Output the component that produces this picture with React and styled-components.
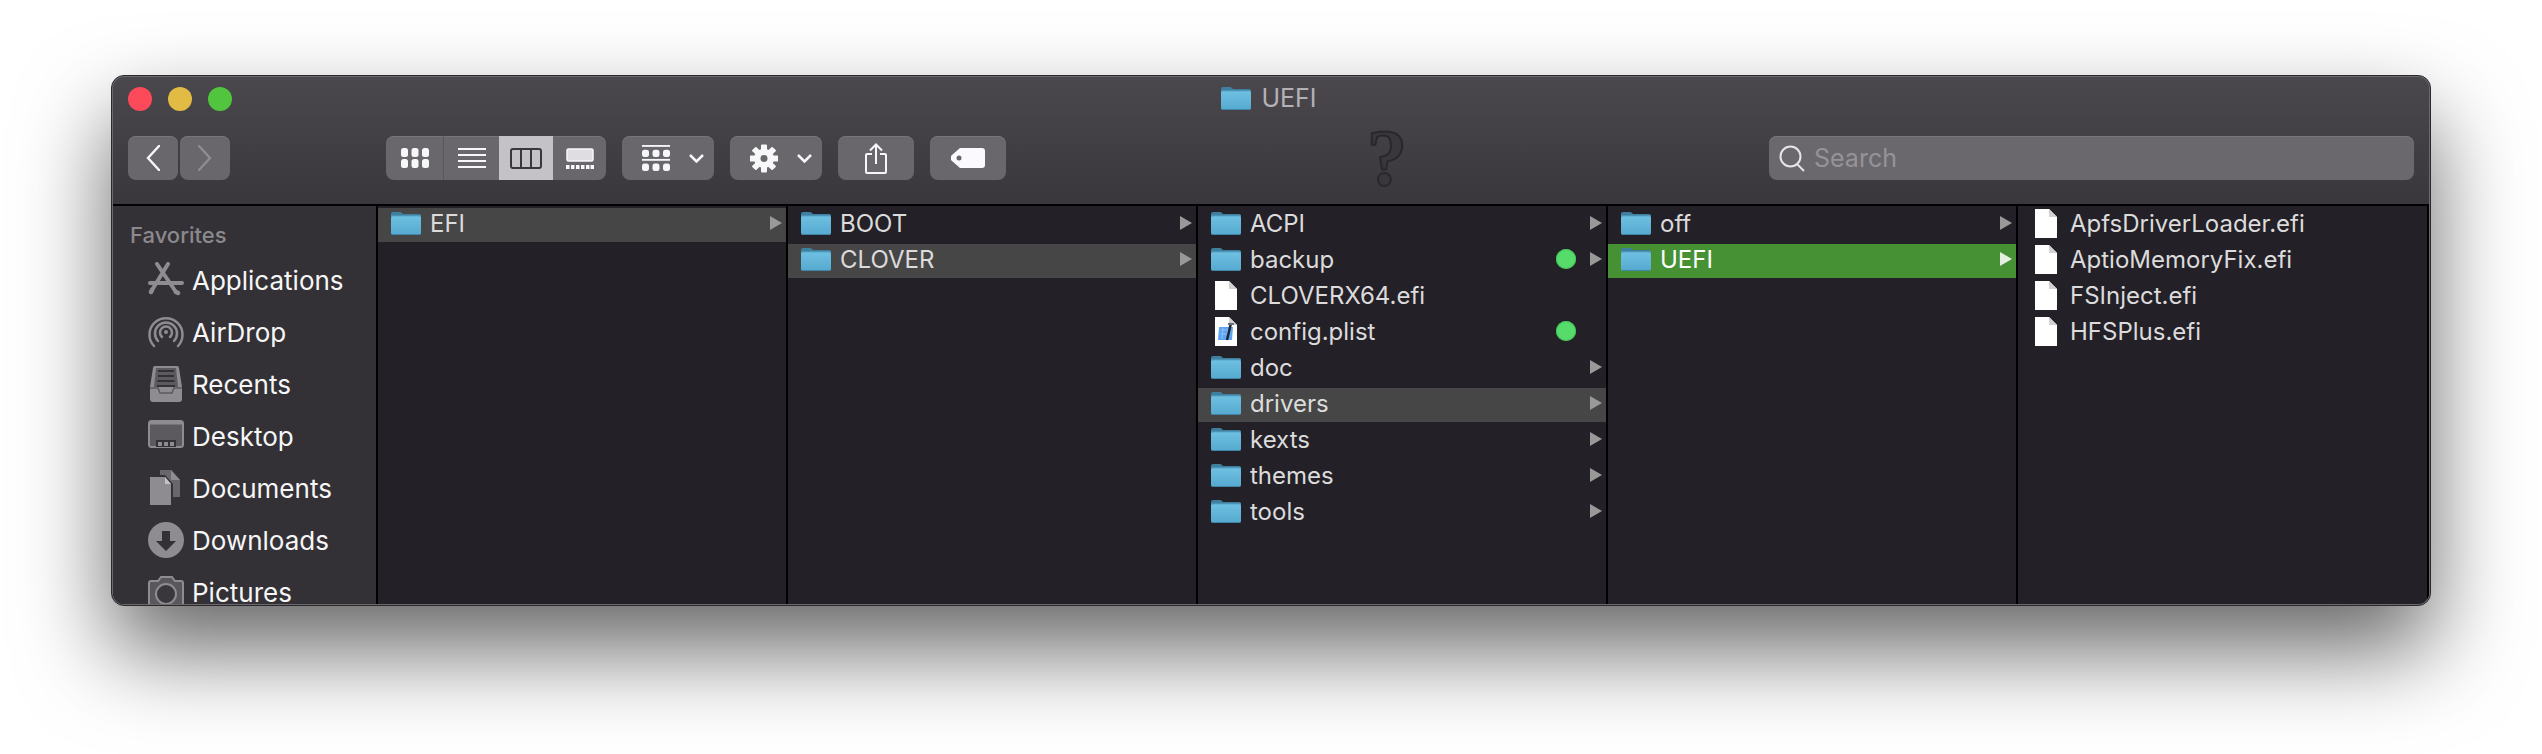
import React from 'react';
import styled, { createGlobalStyle } from 'styled-components';

const GlobalStyle = createGlobalStyle`
  html, body {
    margin: 0;
    height: 754px;
    overflow: hidden;
    background: #fff;
  }
  body {
    font-family: 'Inter', 'Liberation Sans', sans-serif;
    -webkit-font-smoothing: antialiased;
  }
`;

const Page = styled.div`
  width: 2542px;
  height: 754px;
  box-sizing: border-box;
  padding: 75px 0 0 111px;
  overflow: hidden;
`;

const Window = styled.div`
  width: 2320px;
  height: 531px;
  box-sizing: border-box;
  padding: 1px;
  border: 1px solid #2a2a2c;
  border-radius: 13px;
  background: #6b696d;
  box-shadow: 0 44px 90px rgba(0, 0, 0, 0.6);
  display: flex;
`;

const Inner = styled.div`
  flex: 1;
  min-width: 0;
  border-radius: 11px;
  overflow: hidden;
  display: flex;
  flex-direction: column;
`;

const Toolbar = styled.header`
  background: linear-gradient(#4a484d, #39373b);
  border-bottom: 2px solid #000;
  box-sizing: border-box;
  height: 129px;
  flex: none;
`;

const TitleBar = styled.div`
  height: 42px;
  margin-bottom: 17px;
  display: grid;
  grid-template-columns: 1fr auto 1fr;
  align-items: center;
  padding: 0 15px;
`;

const Lights = styled.div`
  display: flex;
  gap: 16px;
  padding-top: 1px;
`;

const Light = styled.span`
  width: 24px;
  height: 24px;
  border-radius: 50%;
  background: ${(p) => p.$color};
`;

const Title = styled.div`
  display: flex;
  align-items: center;
  gap: 10px;
  margin-right: 4px;
  color: #b3b1b5;
  font-size: 25px;
`;

const Tools = styled.div`
  display: flex;
  align-items: center;
  padding: 0 15px;
`;

const ToolButton = styled.div`
  width: ${(p) => p.$w}px;
  height: 44px;
  margin-left: ${(p) => p.$ml || 0}px;
  border-radius: 8px;
  background: #69676c;
  box-shadow: inset 0 1px 0 #78767b;
  display: flex;
  align-items: center;
  justify-content: ${(p) => (p.$menu ? 'flex-start' : 'center')};
  padding-left: ${(p) => (p.$menu ? '20px' : '0')};
  box-sizing: border-box;
  flex: none;
  gap: ${(p) => (p.$menu ? '19px' : '0')};
`;

const SegmentGroup = styled.div`
  display: flex;
  margin-left: 156px;
  height: 44px;
  border-radius: 8px;
  overflow: hidden;
  background: #69676c;
  box-shadow: inset 0 1px 0 #78767b;
  flex: none;
`;

const Segment = styled.div`
  width: ${(p) => p.$w}px;
  display: flex;
  align-items: center;
  justify-content: center;
  background: ${(p) => (p.$active ? '#c4c2c7' : 'transparent')};
  border-right: ${(p) => (p.$divide ? '1px solid #59575b' : 'none')};
`;

const Placeholder = styled.div`
  width: 34px;
  margin-left: 364px;
  display: flex;
  justify-content: center;
  font-family: 'Liberation Serif', serif;
  font-size: 80px;
  font-weight: 700;
  line-height: 44px;
  color: #39373b;
  -webkit-text-stroke: 2px #29272b;
  flex: none;
`;

const Search = styled.div`
  margin-left: auto;
  width: 645px;
  height: 44px;
  box-sizing: border-box;
  padding-left: 10px;
  border-radius: 8px;
  background: #6a686d;
  box-shadow: inset 0 1px 0 #78767b;
  display: flex;
  align-items: center;
  gap: 9px;
  color: #959398;
  font-size: 25px;
`;

const Body = styled.div`
  flex: 1;
  min-height: 0;
  display: flex;
  background: #232127;
`;

const Sidebar = styled.nav`
  width: 263px;
  flex: none;
  background: #333136;
  padding: 13px 0 0 17px;
  box-sizing: border-box;
  overflow: hidden;
`;

const SideHeading = styled.div`
  height: 32px;
  margin-bottom: 3px;
  line-height: 32px;
  color: #8b898d;
  font-size: 22px;
  font-weight: 500;
`;

const SideRow = styled.div`
  height: 52px;
  padding-left: 18px;
  display: flex;
  align-items: center;
  gap: 8px;
  color: #f6f6f6;
  font-size: 26px;
  white-space: nowrap;
`;

const SideIcon = styled.svg`
  width: 36px;
  height: 36px;
  flex: none;
`;

const Column = styled.section`
  width: 410px;
  flex: ${(p) => (p.$last ? 1 : 'none')};
  box-sizing: border-box;
  border-left: 2px solid #000;
  border-right: ${(p) => (p.$last ? '2px solid #000' : 'none')};
  padding-top: 2px;
`;

const Row = styled.div`
  height: 34px;
  box-sizing: border-box;
  margin-bottom: 2px;
  padding: 0 4px 4px 13px;
  display: flex;
  align-items: center;
  gap: 9px;
  background: ${(p) => (p.$sel === 'active' ? '#459133' : p.$sel ? '#464646' : 'transparent')};
  color: ${(p) => (p.$sel === 'active' ? '#fff' : '#dcdbdc')};
  font-size: 24px;
`;

const IconSlot = styled.span`
  width: 30px;
  height: 30px;
  flex: none;
  display: flex;
  align-items: center;
  justify-content: center;
`;

const Name = styled.span`
  flex: 1;
  white-space: nowrap;
`;

const Dot = styled.span`
  width: 20px;
  height: 20px;
  margin-right: ${(p) => (p.$arrow ? '5px' : '26px')};
  border-radius: 50%;
  background: #57dc6c;
  box-shadow: inset 0 0 0 1px #3fc455;
  flex: none;
`;

const Arrow = styled.span`
  width: 0;
  height: 0;
  border-left: 12px solid ${(p) => (p.$light ? '#e4efe0' : '#999')};
  border-top: 7.5px solid transparent;
  border-bottom: 7.5px solid transparent;
  flex: none;
`;

const FolderIcon = ({ id }) => (
  <svg width='30' height='24' viewBox='0 0 30 24'>
    <defs>
      <linearGradient id={id} x1='0' y1='0' x2='0' y2='1'>
        <stop offset='0' stopColor='#6fc1e2' />
        <stop offset='1' stopColor='#55a9cf' />
      </linearGradient>
    </defs>
    <path d='M0 3a2 2 0 0 1 2-2h7c1.5 0 2 1 3 2h16a2 2 0 0 1 2 2v5H0z' fill='#3f7f9f' />
    <rect y='5' width='30' height='19' rx='2' fill={`url(#${id})`} />
    <rect y='4.5' width='30' height='1' fill='#5aa6c9' />
    <rect x='1' y='23' width='28' height='1' fill='#3f85a8' />
  </svg>
);

const DocIcon = () => (
  <svg width='22' height='29' viewBox='0 0 22 29'>
    <path d='M0 0h14l8 8v21H0z' fill='#fff' />
    <path d='M14 0l8 8h-8z' fill='#d2d2d2' />
  </svg>
);

const PlistIcon = () => (
  <svg width='22' height='29' viewBox='0 0 22 29'>
    <path d='M0 0h14l8 8v21H0z' fill='#fff' />
    <path d='M14 0l8 8h-8z' fill='#d2d2d2' />
    <path d='M4 10h14l-1 13H3z' fill='#5ea4f2' />
    <path d='M6 13h9M5.500 17h9M8 11l-1 11M13 11l-1 11' stroke='#8cc0f7' strokeWidth='1' />
    <path d='M16 6l-4 17' stroke='#1d2530' strokeWidth='2.500' />
    <path d='M13 7h6' stroke='#6c7078' strokeWidth='2' />
  </svg>
);

const Chevron = () => (
  <svg width='15' height='9' viewBox='0 0 15 9' fill='none'>
    <path d='M1 1l6.500 6.500L14 1' stroke='#f7f6f8' strokeWidth='2.500' />
  </svg>
);

const NavChevron = ({ flip, color }) => (
  <svg width='14' height='26' viewBox='0 0 14 26' fill='none' style={flip ? { transform: 'scaleX(-1)' } : undefined}>
    <path d='M13 1L2 13l11 12' stroke={color} strokeWidth='2.400' strokeLinecap='round' />
  </svg>
);

const GridIcon = () => (
  <svg width='28' height='20' viewBox='0 0 28 20' fill='#f7f6f8'>
    {[0, 10.500, 21].map((x) =>
      [0, 11].map((y) => <rect key={`${x}-${y}`} x={x} y={y} width='7' height='9' rx='2.500' />)
    )}
  </svg>
);

const ListIcon = () => (
  <svg width='28' height='20' viewBox='0 0 28 20' fill='#f7f6f8'>
    {[0, 6, 12, 18].map((y) => <rect key={y} y={y} width='28' height='2' />)}
  </svg>
);

const ColumnsIcon = () => (
  <svg width='32' height='21' viewBox='0 0 32 21' fill='none' stroke='#39373b' strokeWidth='2'>
    <rect x='1' y='1' width='30' height='19' rx='2' />
    <path d='M11 1v19M21 1v19' />
  </svg>
);

const GalleryIcon = () => (
  <svg width='28' height='21' viewBox='0 0 28 21'>
    <rect x='1' y='1' width='26' height='12' rx='1.500' fill='#dfdde2' stroke='#f7f6f8' strokeWidth='1.500' />
    {[0, 5, 10, 15, 20, 24.500].map((x) => <rect key={x} x={x} y='17' width='3.500' height='4' fill='#f7f6f8' />)}
  </svg>
);

const ArrangeIcon = () => (
  <svg width='28' height='26' viewBox='0 0 28 28' preserveAspectRatio='none' fill='#f7f6f8'>
    <rect width='28' height='2' />
    <rect y='15' width='28' height='2' />
    {[0, 10.500, 21].map((x) => (
      <g key={x}>
        <rect x={x} y='5' width='7' height='8' rx='2.500' />
        <rect x={x} y='20' width='7' height='8' rx='2.500' />
      </g>
    ))}
  </svg>
);

const GearIcon = () => (
  <svg width='28' height='29' viewBox='0 0 28 30' preserveAspectRatio='none'>
    <g fill='#f7f6f8'>
      {[0, 45, 90, 135].map((a) => (
        <rect key={a} x='11' y='0.500' width='6' height='29' rx='1' transform={`rotate(${a} 14 15)`} />
      ))}
      <circle cx='14' cy='15' r='10' />
    </g>
    <circle cx='14' cy='15' r='3.500' fill='#69676c' />
  </svg>
);

const ShareIcon = () => (
  <svg width='22' height='31' viewBox='0 0 22 31' fill='none' stroke='#f7f6f8' strokeWidth='2'>
    <path d='M7 11H2a1 1 0 0 0-1 1v17a1 1 0 0 0 1 1h18a1 1 0 0 0 1-1V12a1 1 0 0 0-1-1h-5' />
    <path d='M11 21V1.500M5 7.500l6-6 6 6' />
  </svg>
);

const TagIcon = () => (
  <svg width='34' height='20' viewBox='0 0 34 20'>
    <path d='M9 0h22a3 3 0 0 1 3 3v14a3 3 0 0 1-3 3H9L1 13a4 4 0 0 1 0-6z' fill='#fbf9fd' />
    <circle cx='8' cy='10' r='2.500' fill='#69676c' />
  </svg>
);

const SearchIcon = () => (
  <svg width='26' height='27' viewBox='0 0 26 27' fill='none' stroke='#e6e4e8' strokeWidth='2'>
    <circle cx='11.500' cy='11.500' r='10' />
    <path d='M18 19l7 7' />
  </svg>
);

const sideGray = '#8e8c90';

const AppsGlyph = () => (
  <SideIcon viewBox='0 0 36 36' fill='none' stroke={sideGray} strokeWidth='4' strokeLinecap='round'>
    <path d='M9 2l19 28M20 2L4 28M2 21h32' />
    <path d='M28 30l2 1M4 28l-1 2' strokeWidth='4.500' />
  </SideIcon>
);

const AirDropGlyph = () => (
  <SideIcon viewBox='0 0 36 36' fill='none' stroke={sideGray} strokeWidth='2.500' strokeLinecap='round'>
    <path d='M6 32a16.500 16.500 0 1 1 24 0' />
    <path d='M10 27a11 11 0 1 1 16 0' />
    <path d='M14 23a6 6 0 1 1 8 0' />
    <circle cx='18' cy='18' r='2' fill={sideGray} stroke='none' />
  </SideIcon>
);

const RecentsGlyph = () => (
  <SideIcon viewBox='0 0 36 36'>
    <path d='M5 2a2 2 0 0 1 2-2h22a2 2 0 0 1 2 2l3 19v12a3 3 0 0 1-3 3H5a3 3 0 0 1-3-3V21z' fill={sideGray} />
    <path d='M8 2h20l2 19H6z' fill='#333136' opacity='0.55' />
    <path d='M10 5h16M10 10h16M9.500 15h17M9 20h18' stroke='#333136' strokeWidth='2' />
    <path d='M2 22h8l2 5h12l2-5h8' fill='none' stroke='#5b595d' strokeWidth='1.500' />
  </SideIcon>
);

const DesktopGlyph = () => (
  <SideIcon viewBox='0 0 36 36'>
    <rect x='1' y='3' width='34' height='26' rx='2.500' fill='#5c5a5e' stroke={sideGray} strokeWidth='2' />
    <rect x='1' y='3' width='34' height='3.500' fill={sideGray} />
    <rect x='8' y='22' width='20' height='7' fill='#333136' />
    {[10, 16, 22].map((x) => <rect key={x} x={x} y='24' width='4' height='4' fill={sideGray} />)}
  </SideIcon>
);

const DocumentsGlyph = () => (
  <SideIcon viewBox='0 0 36 36'>
    <path d='M12 0h11l9 10v17h-7V14l-8-9h-5z' fill='#69676b' />
    <path d='M23 0l9 10h-9z' fill={sideGray} />
    <path d='M2 7h15l6 7v21H2z' fill={sideGray} />
    <path d='M17 7l6 7h-6z' fill='#c4c2c6' />
  </SideIcon>
);

const DownloadsGlyph = () => (
  <SideIcon viewBox='0 0 36 36'>
    <circle cx='18' cy='18' r='18' fill={sideGray} />
    <path d='M14 9h8v10h6L18 29 8 19h6z' fill='#333136' />
  </SideIcon>
);

const PicturesGlyph = () => (
  <SideIcon viewBox='0 0 36 36'>
    <path d='M1 9a2 2 0 0 1 2-2h7l3-4h11l3 4h6a2 2 0 0 1 2 2v25H1z' fill='#59575b' stroke={sideGray} strokeWidth='2' />
    <circle cx='18' cy='20' r='10' fill='#39373b' stroke={sideGray} strokeWidth='2' />
  </SideIcon>
);

const favorites = [
  { name: 'Applications', Glyph: AppsGlyph },
  { name: 'AirDrop', Glyph: AirDropGlyph },
  { name: 'Recents', Glyph: RecentsGlyph },
  { name: 'Desktop', Glyph: DesktopGlyph },
  { name: 'Documents', Glyph: DocumentsGlyph },
  { name: 'Downloads', Glyph: DownloadsGlyph },
  { name: 'Pictures', Glyph: PicturesGlyph },
];

const columns = [
  [{ name: 'EFI', sel: 'inactive' }],
  [{ name: 'BOOT' }, { name: 'CLOVER', sel: 'inactive' }],
  [
    { name: 'ACPI' },
    { name: 'backup', tag: true },
    { name: 'CLOVERX64.efi', kind: 'doc' },
    { name: 'config.plist', kind: 'plist', tag: true },
    { name: 'doc' },
    { name: 'drivers', sel: 'inactive' },
    { name: 'kexts' },
    { name: 'themes' },
    { name: 'tools' },
  ],
  [{ name: 'off' }, { name: 'UEFI', sel: 'active' }],
  [
    { name: 'ApfsDriverLoader.efi', kind: 'doc' },
    { name: 'AptioMemoryFix.efi', kind: 'doc' },
    { name: 'FSInject.efi', kind: 'doc' },
    { name: 'HFSPlus.efi', kind: 'doc' },
  ],
];

const ItemIcon = ({ kind, id }) => {
  if (kind === 'doc') return <DocIcon />;
  if (kind === 'plist') return <PlistIcon />;
  return <FolderIcon id={id} />;
};

const App = () => {
  return (
    <Page>
      <GlobalStyle />
      <Window>
        <Inner>
          <Toolbar>
            <TitleBar>
              <Lights>
                <Light $color='#fc4a5b' />
                <Light $color='#e1bb43' />
                <Light $color='#50c53d' />
              </Lights>
              <Title>
                <FolderIcon id='title-folder' />
                UEFI
              </Title>
            </TitleBar>
            <Tools>
              <ToolButton $w={50}>
                <NavChevron color='#f7f6f8' />
              </ToolButton>
              <ToolButton $w={50} $ml={2}>
                <NavChevron flip color='#8e8c90' />
              </ToolButton>
              <SegmentGroup>
                <Segment $w={57} $divide>
                  <GridIcon />
                </Segment>
                <Segment $w={55}>
                  <ListIcon />
                </Segment>
                <Segment $w={54} $active>
                  <ColumnsIcon />
                </Segment>
                <Segment $w={53}>
                  <GalleryIcon />
                </Segment>
              </SegmentGroup>
              <ToolButton $w={92} $ml={16} $menu>
                <ArrangeIcon />
                <Chevron />
              </ToolButton>
              <ToolButton $w={92} $ml={16} $menu>
                <GearIcon />
                <Chevron />
              </ToolButton>
              <ToolButton $w={76} $ml={16}>
                <ShareIcon />
              </ToolButton>
              <ToolButton $w={76} $ml={16}>
                <TagIcon />
              </ToolButton>
              <Placeholder>?</Placeholder>
              <Search>
                <SearchIcon />
                Search
              </Search>
            </Tools>
          </Toolbar>
          <Body>
            <Sidebar>
              <SideHeading>Favorites</SideHeading>
              {favorites.map(({ name, Glyph }) => (
                <SideRow key={name}>
                  <Glyph />
                  {name}
                </SideRow>
              ))}
            </Sidebar>
            {columns.map((items, c) => (
              <Column key={c} $last={c === columns.length - 1}>
                {items.map((item) => {
                  const isFolder = !item.kind;
                  return (
                    <Row key={item.name} $sel={item.sel}>
                      <IconSlot>
                        <ItemIcon kind={item.kind} id={`folder-${c}-${item.name}`} />
                      </IconSlot>
                      <Name>{item.name}</Name>
                      {item.tag && <Dot $arrow={isFolder} />}
                      {isFolder && <Arrow $light={item.sel === 'active'} />}
                    </Row>
                  );
                })}
              </Column>
            ))}
          </Body>
        </Inner>
      </Window>
    </Page>
  );
};

export default App;
